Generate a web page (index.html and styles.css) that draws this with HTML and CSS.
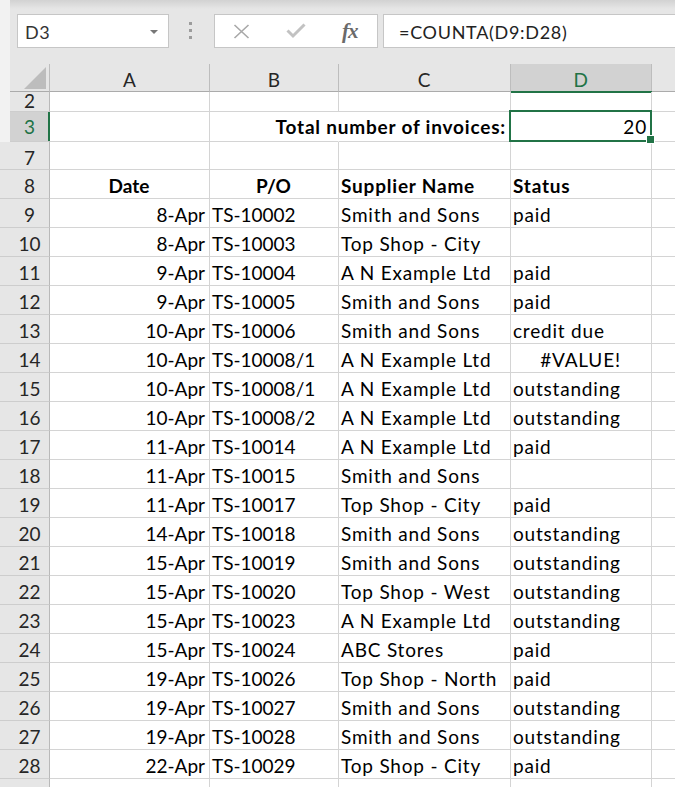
FILE: index.html
```html
<!DOCTYPE html>
<html>
<head>
<meta charset="utf-8">
<link rel="stylesheet" href="styles.css">
</head>
<body>
<div class="top">
  <div class="strip"></div>
  <div class="main">
    <div class="toolbar">
      <div class="namebox"><span>D3</span><span class="dd"></span></div>
      <div class="dots"><i></i><i></i><i></i></div>
      <div class="fxgroup">
        <svg class="ic-x" width="17" height="15" viewBox="0 0 17 15"><path d="M1.5 1 L15.5 14 M15.5 1 L1.5 14" stroke="#a8a8a8" stroke-width="1.6" fill="none"/></svg>
        <svg class="ic-ok" width="20" height="16" viewBox="0 0 20 16"><path d="M1.5 7.5 L7 13 L18.5 1.5" stroke="#c2c2c2" stroke-width="3" fill="none"/></svg>
        <span class="fx">fx</span>
      </div>
      <div class="formula">=COUNTA(D9:D28)</div>
    </div>
    <div class="row hdr">
      <div class="c corner"><svg width="22" height="22" viewBox="0 0 22 22"><path d="M22 0 L22 22 L0 22 Z" fill="#bdbdbd"/></svg></div>
      <div class="c">A</div>
      <div class="c">B</div>
      <div class="c">C</div>
      <div class="c sel">D</div>
      <div class="c last"></div>
    </div>
    <div class="row r2">
      <div class="c rh">2</div>
      <div class="c"></div>
      <div class="c"></div>
      <div class="c"></div>
      <div class="c"></div>
      <div class="c last"></div>
    </div>
    <div class="row r3">
      <div class="c rh selrow">3</div>
      <div class="c"></div>
      <div class="c nob"></div>
      <div class="c right b total">Total number of invoices:</div>
      <div class="c right active">20</div>
      <div class="c last"></div>
    </div>
  </div>
</div>
<div class="bottom">
  <div class="row r7"><div class="c rh">7</div><div class="c"></div><div class="c"></div><div class="c"></div><div class="c"></div><div class="c last"></div></div>
  <div class="row"><div class="c rh">8</div><div class="c center b">Date</div><div class="c center b">P/O</div><div class="c b">Supplier Name</div><div class="c b">Status</div><div class="c last"></div></div>
  <div class="row"><div class="c rh">9</div><div class="c right">8-Apr</div><div class="c">TS-10002</div><div class="c">Smith and Sons</div><div class="c">paid</div><div class="c last"></div></div>
  <div class="row"><div class="c rh">10</div><div class="c right">8-Apr</div><div class="c">TS-10003</div><div class="c">Top Shop - City</div><div class="c"></div><div class="c last"></div></div>
  <div class="row"><div class="c rh">11</div><div class="c right">9-Apr</div><div class="c">TS-10004</div><div class="c">A N Example Ltd</div><div class="c">paid</div><div class="c last"></div></div>
  <div class="row"><div class="c rh">12</div><div class="c right">9-Apr</div><div class="c">TS-10005</div><div class="c">Smith and Sons</div><div class="c">paid</div><div class="c last"></div></div>
  <div class="row"><div class="c rh">13</div><div class="c right">10-Apr</div><div class="c">TS-10006</div><div class="c">Smith and Sons</div><div class="c">credit due</div><div class="c last"></div></div>
  <div class="row"><div class="c rh">14</div><div class="c right">10-Apr</div><div class="c">TS-10008/1</div><div class="c">A N Example Ltd</div><div class="c center">#VALUE!</div><div class="c last"></div></div>
  <div class="row"><div class="c rh">15</div><div class="c right">10-Apr</div><div class="c">TS-10008/1</div><div class="c">A N Example Ltd</div><div class="c">outstanding</div><div class="c last"></div></div>
  <div class="row"><div class="c rh">16</div><div class="c right">10-Apr</div><div class="c">TS-10008/2</div><div class="c">A N Example Ltd</div><div class="c">outstanding</div><div class="c last"></div></div>
  <div class="row"><div class="c rh">17</div><div class="c right">11-Apr</div><div class="c">TS-10014</div><div class="c">A N Example Ltd</div><div class="c">paid</div><div class="c last"></div></div>
  <div class="row"><div class="c rh">18</div><div class="c right">11-Apr</div><div class="c">TS-10015</div><div class="c">Smith and Sons</div><div class="c"></div><div class="c last"></div></div>
  <div class="row"><div class="c rh">19</div><div class="c right">11-Apr</div><div class="c">TS-10017</div><div class="c">Top Shop - City</div><div class="c">paid</div><div class="c last"></div></div>
  <div class="row"><div class="c rh">20</div><div class="c right">14-Apr</div><div class="c">TS-10018</div><div class="c">Smith and Sons</div><div class="c">outstanding</div><div class="c last"></div></div>
  <div class="row"><div class="c rh">21</div><div class="c right">15-Apr</div><div class="c">TS-10019</div><div class="c">Smith and Sons</div><div class="c">outstanding</div><div class="c last"></div></div>
  <div class="row"><div class="c rh">22</div><div class="c right">15-Apr</div><div class="c">TS-10020</div><div class="c">Top Shop - West</div><div class="c">outstanding</div><div class="c last"></div></div>
  <div class="row"><div class="c rh">23</div><div class="c right">15-Apr</div><div class="c">TS-10023</div><div class="c">A N Example Ltd</div><div class="c">outstanding</div><div class="c last"></div></div>
  <div class="row"><div class="c rh">24</div><div class="c right">15-Apr</div><div class="c">TS-10024</div><div class="c">ABC Stores</div><div class="c">paid</div><div class="c last"></div></div>
  <div class="row"><div class="c rh">25</div><div class="c right">19-Apr</div><div class="c">TS-10026</div><div class="c">Top Shop - North</div><div class="c">paid</div><div class="c last"></div></div>
  <div class="row"><div class="c rh">26</div><div class="c right">19-Apr</div><div class="c">TS-10027</div><div class="c">Smith and Sons</div><div class="c">outstanding</div><div class="c last"></div></div>
  <div class="row"><div class="c rh">27</div><div class="c right">19-Apr</div><div class="c">TS-10028</div><div class="c">Smith and Sons</div><div class="c">outstanding</div><div class="c last"></div></div>
  <div class="row"><div class="c rh">28</div><div class="c right">22-Apr</div><div class="c">TS-10029</div><div class="c">Top Shop - City</div><div class="c">paid</div><div class="c last"></div></div>
  <div class="row r29"><div class="c rh"></div><div class="c"></div><div class="c"></div><div class="c"></div><div class="c"></div><div class="c last"></div></div>
</div>
</body>
</html>
```
FILE: styles.css
```css
* { box-sizing: border-box; margin: 0; padding: 0; }
html, body { width: 675px; height: 787px; overflow: hidden; background: #fff; }
body { font-family: Lato, "Liberation Sans", sans-serif; color: #000; }

.top { display: flex; }
.strip { width: 10px; flex: none; background: #f2f2f2; }
.main { flex: 1; min-width: 0; }

.toolbar {
  height: 64px;
  background: linear-gradient(#d2d2d2, #e6e6e6 9px);
  display: flex;
  align-items: flex-start;
  padding-top: 14px;
}
.namebox {
  margin-left: 7px;
  width: 152px;
  height: 34px;
  flex: none;
  background: #fff;
  border: 1px solid #c6c6c6;
  display: flex;
  align-items: center;
  justify-content: space-between;
  padding: 1px 10px 0 7px;
  font-size: 18px;
  letter-spacing: 0.5px;
  color: #333;
}
.dd { width: 0; height: 0; border-left: 4px solid transparent; border-right: 4px solid transparent; border-top: 4px solid #777; }
.dots { margin-left: 20px; width: 3px; padding-top: 8px; display: flex; flex-direction: column; gap: 4px; flex: none; }
.dots i { display: block; width: 3px; height: 3px; background: #9c9c9c; }
.fxgroup {
  margin-left: 22px;
  width: 164px;
  height: 34px;
  flex: none;
  background: #fff;
  border: 1px solid #c6c6c6;
  display: flex;
  align-items: center;
  padding-left: 18px;
}
.ic-ok { margin-left: 36px; }
.fx {
  margin-left: 36px;
  font-family: "Liberation Serif", serif;
  font-style: italic;
  font-weight: bold;
  font-size: 21px;
  color: #6a6a6a;
  letter-spacing: -1px;
}
.formula {
  margin-left: 5px;
  margin-right: -4px;
  flex: 1;
  height: 34px;
  background: #fff;
  border: 1px solid #c6c6c6;
  display: flex;
  align-items: center;
  padding: 1px 0 0 15px;
  font-size: 18px;
  letter-spacing: 0.7px;
  color: #222;
  white-space: nowrap;
}

.row { display: grid; grid-template-columns: 40px 160px 129px 172px 141px 1fr; height: 29px; }
.bottom .row { grid-template-columns: 50px 160px 129px 172px 141px 1fr; }
.bottom { position: relative; }
.bottom::before {
  content: ""; position: absolute; left: 0; top: 0; width: 10px; height: 5px;
  background: linear-gradient(#cfcfcf, #e6e6e6);
}

.c {
  border-right: 1px solid #d4d4d4;
  border-bottom: 1px solid #d4d4d4;
  display: flex;
  align-items: center;
  padding: 3px 3px 0 2px;
  font-size: 19px;
  white-space: nowrap;
  position: relative;
  min-width: 0;
}
.c.last { border-right: none; }
.row .c:nth-child(4), .row .c:nth-child(5) { letter-spacing: 0.8px; }
.right { justify-content: flex-end; padding-right: 4px; }
.center { justify-content: center; }
.b { font-weight: bold; }
.nob { border-right-color: transparent; }

.rh {
  background: #e6e6e6;
  color: #262626;
  justify-content: center;
  border-right-color: #b9b9b9;
  border-bottom-color: #cdcdcd;
  padding: 3px 0 0 0;
}
.bottom .rh { padding-left: 10px; }

.hdr { height: 28px; }
.hdr .c {
  background: #e6e6e6;
  color: #262626;
  justify-content: center;
  padding: 4px 0 0 0;
  border-right-color: #bdbdbd;
  border-bottom-color: #ababab;
  letter-spacing: 0;
}
.hdr .corner { justify-content: flex-end; align-items: flex-end; padding: 0 3px 2px 0; }
.hdr .corner svg { display: block; }
.hdr .sel { background: #d2d2d2; color: #217346; }
.hdr .sel::after {
  content: ""; position: absolute; left: 0; right: -1px; bottom: -2px; height: 2px; background: #217346;
}

.r2 { height: 20px; }
.r2 .c { padding-top: 0; padding-bottom: 2px; }
.r2 .rh { line-height: 17px; }
.r3 { height: 30px; }
.r3 .c { padding-top: 0; }
.r3 .total { overflow: visible; }
.r3 .active { letter-spacing: 0; }
.selrow { background: #d2d2d2; color: #217346; }
.selrow::after {
  content: ""; position: absolute; top: 0; bottom: 0; right: -1px; width: 2px; background: #217346;
}
.active { padding-right: 4px; }
.active::after {
  content: ""; position: absolute; left: -2px; top: -2px; right: -1px; bottom: -1px;
  border: 2px solid #217346;
}
.active::before {
  content: ""; position: absolute; right: -4px; bottom: -3px; width: 7px; height: 7px;
  background: #217346; border: 1px solid #fff; z-index: 2;
}
.r7 { height: 28px; }
.r29 { height: 9px; }
```
